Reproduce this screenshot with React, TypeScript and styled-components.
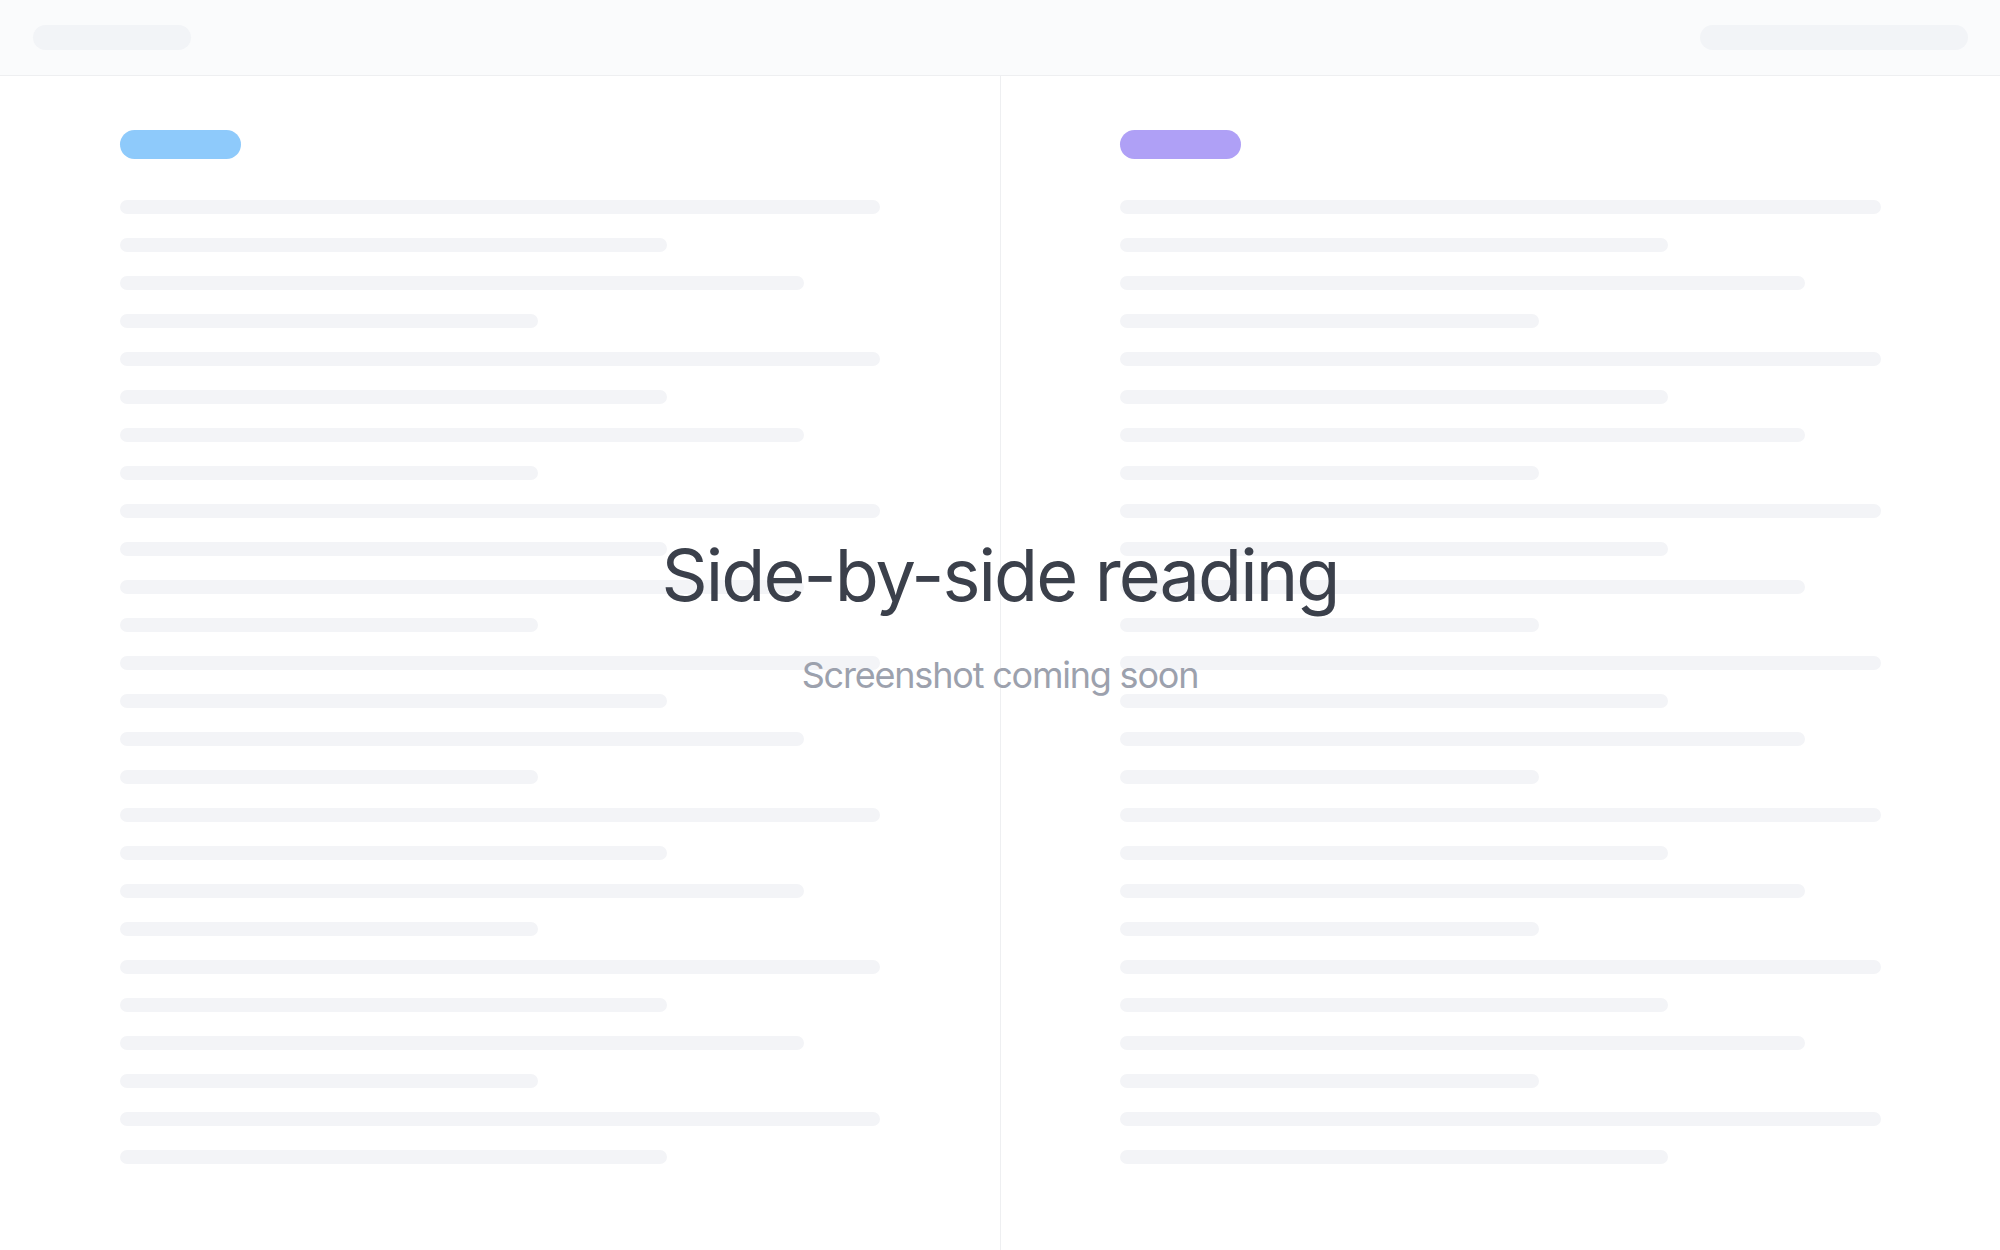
import styled, { createGlobalStyle } from "styled-components";

const GlobalStyle = createGlobalStyle`
  * {
    box-sizing: border-box;
  }

  body {
    margin: 0;
    background: #ffffff;
    font-family: Inter, "Noto Sans", "Liberation Sans", sans-serif;
  }
`;

const Page = styled.div`
  min-height: 100vh;
  display: flex;
  flex-direction: column;
  position: relative;
`;

const Header = styled.header`
  height: 76px;
  flex-shrink: 0;
  display: flex;
  align-items: center;
  justify-content: space-between;
  padding: 0 32px 0 33px;
  background-color: #fafbfc;
  border-bottom: 1px solid #eeeff1;
`;

const HeaderPill = styled.div<{ $width: number }>`
  width: ${(p) => p.$width}px;
  height: 25px;
  border-radius: 13px;
  background-color: #f2f4f7;
`;

const Columns = styled.main`
  flex: 1;
  display: grid;
  grid-template-columns: 1001px 999px;
`;

const Column = styled.section<{ $divider?: boolean }>`
  padding: 54px ${(p) => (p.$divider ? "120px" : "119px")} 40px
    ${(p) => (p.$divider ? "120px" : "119px")};
  border-right: ${(p) => (p.$divider ? "1px solid #eeeff1" : "none")};
  display: flex;
  flex-direction: column;
`;

const Tag = styled.div<{ $color: string }>`
  width: 121px;
  height: 29px;
  border-radius: 15px;
  background-color: ${(p) => p.$color};
  margin-bottom: 41px;
`;

const Lines = styled.div`
  display: flex;
  flex-direction: column;
  gap: 24px;
`;

const Line = styled.div<{ $width: number }>`
  width: ${(p) => p.$width}%;
  height: 14px;
  border-radius: 7px;
  background-color: #f3f4f7;
`;

const Overlay = styled.div`
  position: absolute;
  inset: 0;
  display: flex;
  flex-direction: column;
  align-items: center;
  justify-content: center;
  gap: 35px;
  padding-bottom: 21px;
  pointer-events: none;
`;

const Title = styled.h1`
  margin: 0;
  font-size: 72px;
  line-height: 1.2;
  font-weight: 400;
  letter-spacing: -1.9px;
  color: #3b404b;
`;

const Subtitle = styled.p`
  margin: 0;
  font-size: 36px;
  line-height: 1.2;
  font-weight: 400;
  letter-spacing: -1.2px;
  color: #9ca1ad;
`;

const pattern = [100, 72, 90, 55];
const lineWidths = Array.from({ length: 26 }, (_, i) => pattern[i % 4]);

const columns = [
  { id: "left", color: "#8ecafb" },
  { id: "right", color: "#afa0f6" },
];

const App = () => {
  return (
    <>
      <GlobalStyle />
      <Page>
        <Header>
          <HeaderPill $width={158} />
          <HeaderPill $width={268} />
        </Header>
        <Columns>
          {columns.map((col, idx) => (
            <Column key={col.id} $divider={idx === 0}>
              <Tag $color={col.color} />
              <Lines>
                {lineWidths.map((w, i) => (
                  <Line key={i} $width={w} />
                ))}
              </Lines>
            </Column>
          ))}
        </Columns>
        <Overlay>
          <Title>Side-by-side reading</Title>
          <Subtitle>Screenshot coming soon</Subtitle>
        </Overlay>
      </Page>
    </>
  );
};

export default App;
